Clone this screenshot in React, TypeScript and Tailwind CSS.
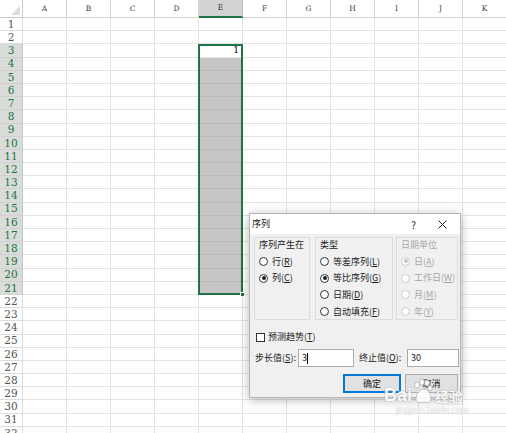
import React from 'react';

const cols = ['A', 'B', 'C', 'D', 'E', 'F', 'G', 'H', 'I', 'J', 'K'];
const rows = Array.from({ length: 32 }, (_, i) => i + 1);

const cjk = "font-['Noto_Sans_CJK_SC','Noto_Sans',sans-serif]";

const Key: React.FC<{ k: string }> = ({ k }) => (
  <span>
    (<span className="underline underline-offset-1">{k}</span>)
  </span>
);

const Radio: React.FC<{ label: string; k: string; checked?: boolean; disabled?: boolean }> = ({
  label,
  k,
  checked,
  disabled,
}) => (
  <div className={`flex items-center h-[16.7px] gap-[4px] ${disabled ? 'text-[#a8a8a8]' : 'text-[#1a1a1a]'}`}>
    <span
      className={`flex items-center justify-center w-[9px] h-[9px] rounded-full border bg-white ${
        disabled ? 'border-[#c8c8c8]' : 'border-[#333]'
      }`}
    >
      {checked && (
        <span className={`w-[4px] h-[4px] rounded-full ${disabled ? 'bg-[#c0c0c0]' : 'bg-[#222]'}`} />
      )}
    </span>
    <span>
      {label}
      <Key k={k} />
    </span>
  </div>
);

const GroupBox: React.FC<{ title: string; width: string; disabled?: boolean; children: React.ReactNode }> = ({
  title,
  width,
  disabled,
  children,
}) => (
  <div className={`${width} h-[83px] border border-[#dcdcdc] pl-[4px]`}>
    <div className={`h-[13px] leading-[13px] ${disabled ? 'text-[#a8a8a8]' : 'text-[#1a1a1a]'}`}>{title}</div>
    <div className="mt-[2px]">{children}</div>
  </div>
);

const SeriesDialog: React.FC = () => (
  <div
    className={`absolute left-[249px] top-[213px] w-[212px] h-[185px] bg-[#f0f0f0] border border-[#b4b4b4] shadow-[0_2px_10px_rgba(0,0,0,0.28)] text-[9px] ${cjk}`}
  >
    <div className="flex items-center h-[20px] bg-white pl-[2px]">
      <span className="text-[9px] text-[#111]">序列</span>
      <span className="ml-auto mr-[22px] text-[10px] text-[#222]">?</span>
      <svg width="9" height="9" viewBox="0 0 9 9" className="mr-[13px]">
        <path d="M0.5 0.5 L8.5 8.5 M8.5 0.5 L0.5 8.5" stroke="#222" strokeWidth="1" />
      </svg>
    </div>
    <div className="pl-[4px] pt-[3px]">
      <div className="flex">
        <GroupBox title="序列产生在" width="w-[56px]">
          <Radio label="行" k="R" />
          <Radio label="列" k="C" checked />
        </GroupBox>
        <div className="ml-[5px]">
          <GroupBox title="类型" width="w-[78px]">
            <Radio label="等差序列" k="L" />
            <Radio label="等比序列" k="G" checked />
            <Radio label="日期" k="D" />
            <Radio label="自动填充" k="F" />
          </GroupBox>
        </div>
        <div className="ml-[3px]">
          <GroupBox title="日期单位" width="w-[62px]" disabled>
            <Radio label="日" k="A" checked disabled />
            <Radio label="工作日" k="W" disabled />
            <Radio label="月" k="M" disabled />
            <Radio label="年" k="Y" disabled />
          </GroupBox>
        </div>
      </div>
      <div className="flex items-center h-[14px] mt-[10px] pl-[2px] gap-[3px] text-[#1a1a1a]">
        <span className="w-[9px] h-[9px] border border-[#333] bg-white" />
        <span>
          预测趋势
          <Key k="T" />
        </span>
      </div>
      <div className="flex items-center h-[18px] mt-[5px] pl-[1px] text-[#1a1a1a]">
        <span className="w-[43px]">
          步长值
          <Key k="S" />:
        </span>
        <div className="w-[56px] h-[18px] border border-[#aaa] bg-white flex items-center pl-[3px]">
          <span>3</span>
          <span className="w-px h-[11px] bg-black" />
        </div>
        <span className="ml-[5px] w-[48px]">
          终止值
          <Key k="O" />:
        </span>
        <div className="w-[52px] h-[18px] border border-[#aaa] bg-white flex items-center pl-[3px]">30</div>
      </div>
      <div className="flex h-[19px] mt-[7px] pl-[89px] gap-[4px] text-[#1a1a1a]">
        <div className="w-[58px] h-[19px] border-2 border-[#0078d7] bg-[#e1e1e1] flex items-center justify-center">
          确定
        </div>
        <div className="w-[53px] h-[19px] border border-[#adadad] bg-[#e1e1e1] flex items-center justify-center">
          取消
        </div>
      </div>
    </div>
  </div>
);

const Watermark: React.FC = () => (
  <div className="absolute left-[384px] top-[376px] pointer-events-none select-none opacity-90">
    <div className="flex items-end h-[28px]">
      <span className="font-['Liberation_Sans',sans-serif] font-bold text-[18px] leading-[18px] text-white [text-shadow:0_0_1px_#9a9a9a,0_0_1px_#9a9a9a]">
        Bai
      </span>
      <svg width="20" height="26" viewBox="0 0 20 26" className="ml-[1px]">
        <g fill="#fff" stroke="#9a9a9a" strokeWidth="0.6">
          <ellipse cx="4" cy="7" rx="2.4" ry="3" />
          <ellipse cx="9" cy="4" rx="2.4" ry="3" />
          <ellipse cx="14" cy="5" rx="2.4" ry="3" />
          <ellipse cx="17" cy="10" rx="2.2" ry="2.8" />
          <path d="M3 22 C3 14 8 11 11 11 C15 11 18 16 18 21 C18 25 14 25 10.5 24 C7 25 3 25 3 22 Z" />
        </g>
      </svg>
      <span className={`ml-[2px] font-bold text-[14px] leading-[16px] text-white [text-shadow:0_0_1px_#9a9a9a,0_0_1px_#9a9a9a] ${cjk}`}>
        经验
      </span>
    </div>
    <div className="ml-[12px] mt-[1px] font-['Liberation_Sans',sans-serif] text-[9px] leading-[10px] text-white [text-shadow:0_0_1px_#a0a0a0]">
      jingyan.baidu.com
    </div>
  </div>
);

const App: React.FC = () => {
  return (
    <div className="relative w-[506px] h-[433px] overflow-hidden bg-white">
      <div className="grid grid-cols-[23px_repeat(11,44px)] grid-rows-[18px_repeat(32,13.2px)] font-['DejaVu_Serif',serif]">
        <div className="relative border-r border-b border-[#c8c8c8] bg-white">
          <div className="absolute right-[2px] bottom-[2px] w-0 h-0 border-l-[9px] border-l-transparent border-b-[9px] border-b-[#dcdcdc]" />
        </div>
        {cols.map((c) => (
          <div
            key={c}
            className={`flex items-center justify-center text-[7.5px] border-r ${
              c === 'E'
                ? 'bg-[#d2d2d2] border-b-2 border-b-[#217346] border-r-[#c0c0c0] text-[#333]'
                : 'bg-white border-b border-[#d4d4d4] text-[#444]'
            }`}
          >
            {c}
          </div>
        ))}
        {rows.map((r) => {
          const sel = r >= 3 && r <= 21;
          return (
            <React.Fragment key={r}>
              <div
                className={`flex items-center justify-center text-[10.5px] leading-none border-r border-b ${
                  sel
                    ? 'bg-[#d9dcd9] text-[#217346] border-r-[#c4c8c4] border-b-[#cfd2cf]'
                    : 'bg-white text-[#555] border-[#dcdcdc]'
                }`}
              >
                {r}
              </div>
              {cols.map((c) => {
                const gray = c === 'E' && r >= 4 && r <= 21;
                return (
                  <div
                    key={c}
                    className={`flex items-center justify-end pr-[3px] text-[9px] border-r border-b ${
                      gray ? 'bg-[#c6c6c6] border-[#b9b9b9]' : 'border-[#e3e3e3]'
                    }`}
                  >
                    {c === 'E' && r === 3 ? '1' : ''}
                  </div>
                );
              })}
            </React.Fragment>
          );
        })}
      </div>
      <div className="absolute left-[198px] top-[44px] w-[45px] h-[251px] border-2 border-[#217346]" />
      <div className="absolute left-[240px] top-[292px] w-[5px] h-[5px] bg-[#217346] border border-white" />
      <SeriesDialog />
      <Watermark />
    </div>
  );
};

export default App;
